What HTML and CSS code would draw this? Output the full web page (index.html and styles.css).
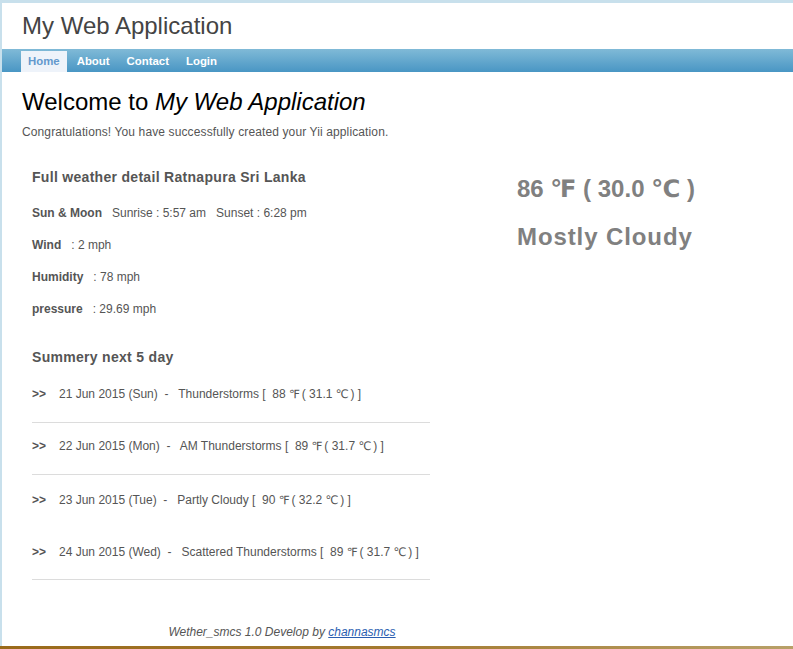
FILE: index.html
```html
<!DOCTYPE html>
<html>
<head>
<meta charset="utf-8">
<title>My Web Application</title>
<link rel="stylesheet" href="styles.css">
</head>
<body>
<div class="page">
  <div class="header"><div class="logo">My Web Application</div></div>
  <div class="mainmenu">
    <ul class="menu">
      <li class="active"><a href="#">Home</a></li>
      <li><a href="#">About</a></li>
      <li><a href="#">Contact</a></li>
      <li><a href="#">Login</a></li>
    </ul>
  </div>
  <div class="content">
    <h1 class="welcome">Welcome to <i>My Web Application</i></h1>
    <p class="congrats">Congratulations! You have successfully created your Yii application.</p>
    <div class="weather">
      <div class="details">
        <h3 class="title">Full weather detail Ratnapura Sri Lanka</h3>
        <div class="info"><b>Sun &amp; Moon</b><span class="sp">Sunrise : 5:57 am</span><span class="sp">Sunset : 6:28 pm</span></div>
        <div class="info"><b>Wind</b><span class="sp">: 2 mph</span></div>
        <div class="info"><b>Humidity</b><span class="sp">: 78 mph</span></div>
        <div class="info"><b>pressure</b><span class="sp">: 29.69 mph</span></div>
        <h3 class="title sum">Summery next 5 day</h3>
        <div class="day line"><b>&gt;&gt;</b><span class="sp2">21 Jun 2015 (Sun)&nbsp; -&nbsp;&nbsp; Thunderstorms [&nbsp; 88 <span class="u">℉</span> ( 31.1 <span class="u">℃</span> ) ]</span></div>
        <div class="day line"><b>&gt;&gt;</b><span class="sp2">22 Jun 2015 (Mon)&nbsp; -&nbsp;&nbsp; AM Thunderstorms [&nbsp; 89 <span class="u">℉</span> ( 31.7 <span class="u">℃</span> ) ]</span></div>
        <div class="day third"><b>&gt;&gt;</b><span class="sp2">23 Jun 2015 (Tue)&nbsp; -&nbsp;&nbsp; Partly Cloudy [&nbsp; 90 <span class="u">℉</span> ( 32.2 <span class="u">℃</span> ) ]</span></div>
        <div class="day line last"><b>&gt;&gt;</b><span class="sp2">24 Jun 2015 (Wed)&nbsp; -&nbsp;&nbsp; Scattered Thunderstorms [&nbsp; 89 <span class="u">℉</span> ( 31.7 <span class="u">℃</span> ) ]</span></div>
      </div>
      <div class="current">
        <div class="temp">86 ℉ ( 30.0 ℃ )</div>
        <div class="temp cond">Mostly Cloudy</div>
      </div>
    </div>
  </div>
  <div class="footer">Wether_smcs 1.0 Develop by <a href="#">channasmcs</a></div>
</div>
<div class="bottombar"></div>
</body>
</html>
```
FILE: styles.css
```css
html, body {
  margin: 0;
  padding: 0;
  background: #fff;
}
body {
  font-family: "Liberation Sans", Arial, "DejaVu Sans", sans-serif;
  font-size: 12px;
  color: #555;
  overflow: hidden;
}
.page {
  border-top: 3px solid #c8e0ec;
  border-left: 2px solid #c8e0ec;
  height: 646px;
  box-sizing: border-box;
}
.header {
  height: 46px;
}
.logo {
  padding-left: 20px;
  font-size: 24px;
  line-height: 46px;
  color: #444;
}
.mainmenu {
  height: 23px;
  background: linear-gradient(#80bad7, #4996c4);
}
.menu {
  list-style: none;
  margin: 0;
  padding: 0 0 0 19px;
  display: flex;
  gap: 3px;
}
.menu li {
  margin-top: 2px;
}
.menu a {
  display: block;
  padding: 0 7px;
  line-height: 21px;
  font-weight: bold;
  font-size: 11.4px;
  color: #fff;
  text-decoration: none;
}
.menu li.active a {
  background: #eef3fa;
  color: #6399cd;
}
.content {
  padding: 0 20px;
}
.welcome {
  margin: 15px 0 0;
  font-size: 24px;
  line-height: 30px;
  font-weight: normal;
  color: #000;
}
.congrats {
  margin: 7px 0 0;
  line-height: 16px;
  letter-spacing: 0.12px;
}
.weather {
  display: flex;
  align-items: flex-start;
  margin-top: 25px;
  padding-left: 10px;
}
.details {
  width: 398px;
}
.title {
  margin: 3px 0 0;
  font-size: 14px;
  line-height: 18px;
  font-weight: bold;
  letter-spacing: 0.3px;
  color: #555;
}
.info {
  line-height: 32px;
}
.title + .info {
  margin-top: 11px;
}
.info b {
  color: #555;
}
.sp {
  margin-left: 10px;
}
.sum {
  margin-top: 23px;
}
.day {
  line-height: 16px;
  padding: 15px 0 20px;
}
.day.third {
  padding-top: 17px;
}
.day.last {
  padding-top: 16px;
  padding-bottom: 19px;
}
.sum + .day {
  margin-top: 5px;
}
.day.line {
  border-bottom: 1px solid #dcdcdc;
}
.sp2 {
  margin-left: 13px;
}
.u {
  font-size: 11.5px;
  letter-spacing: -1.5px;
}
.current {
  margin-left: 87px;
}
.temp {
  font-size: 24px;
  line-height: 48px;
  font-weight: bold;
  color: #808080;
}
.temp.cond {
  letter-spacing: 0.9px;
}
.footer {
  width: 560px;
  margin-top: 44px;
  text-align: center;
  font-style: italic;
  line-height: 16px;
  color: #555;
}
.footer a {
  color: #2a5db0;
}
.bottombar {
  height: 3px;
  background: linear-gradient(90deg, #9a6a1a, #a47a30 50%, #b8a068);
}
```
